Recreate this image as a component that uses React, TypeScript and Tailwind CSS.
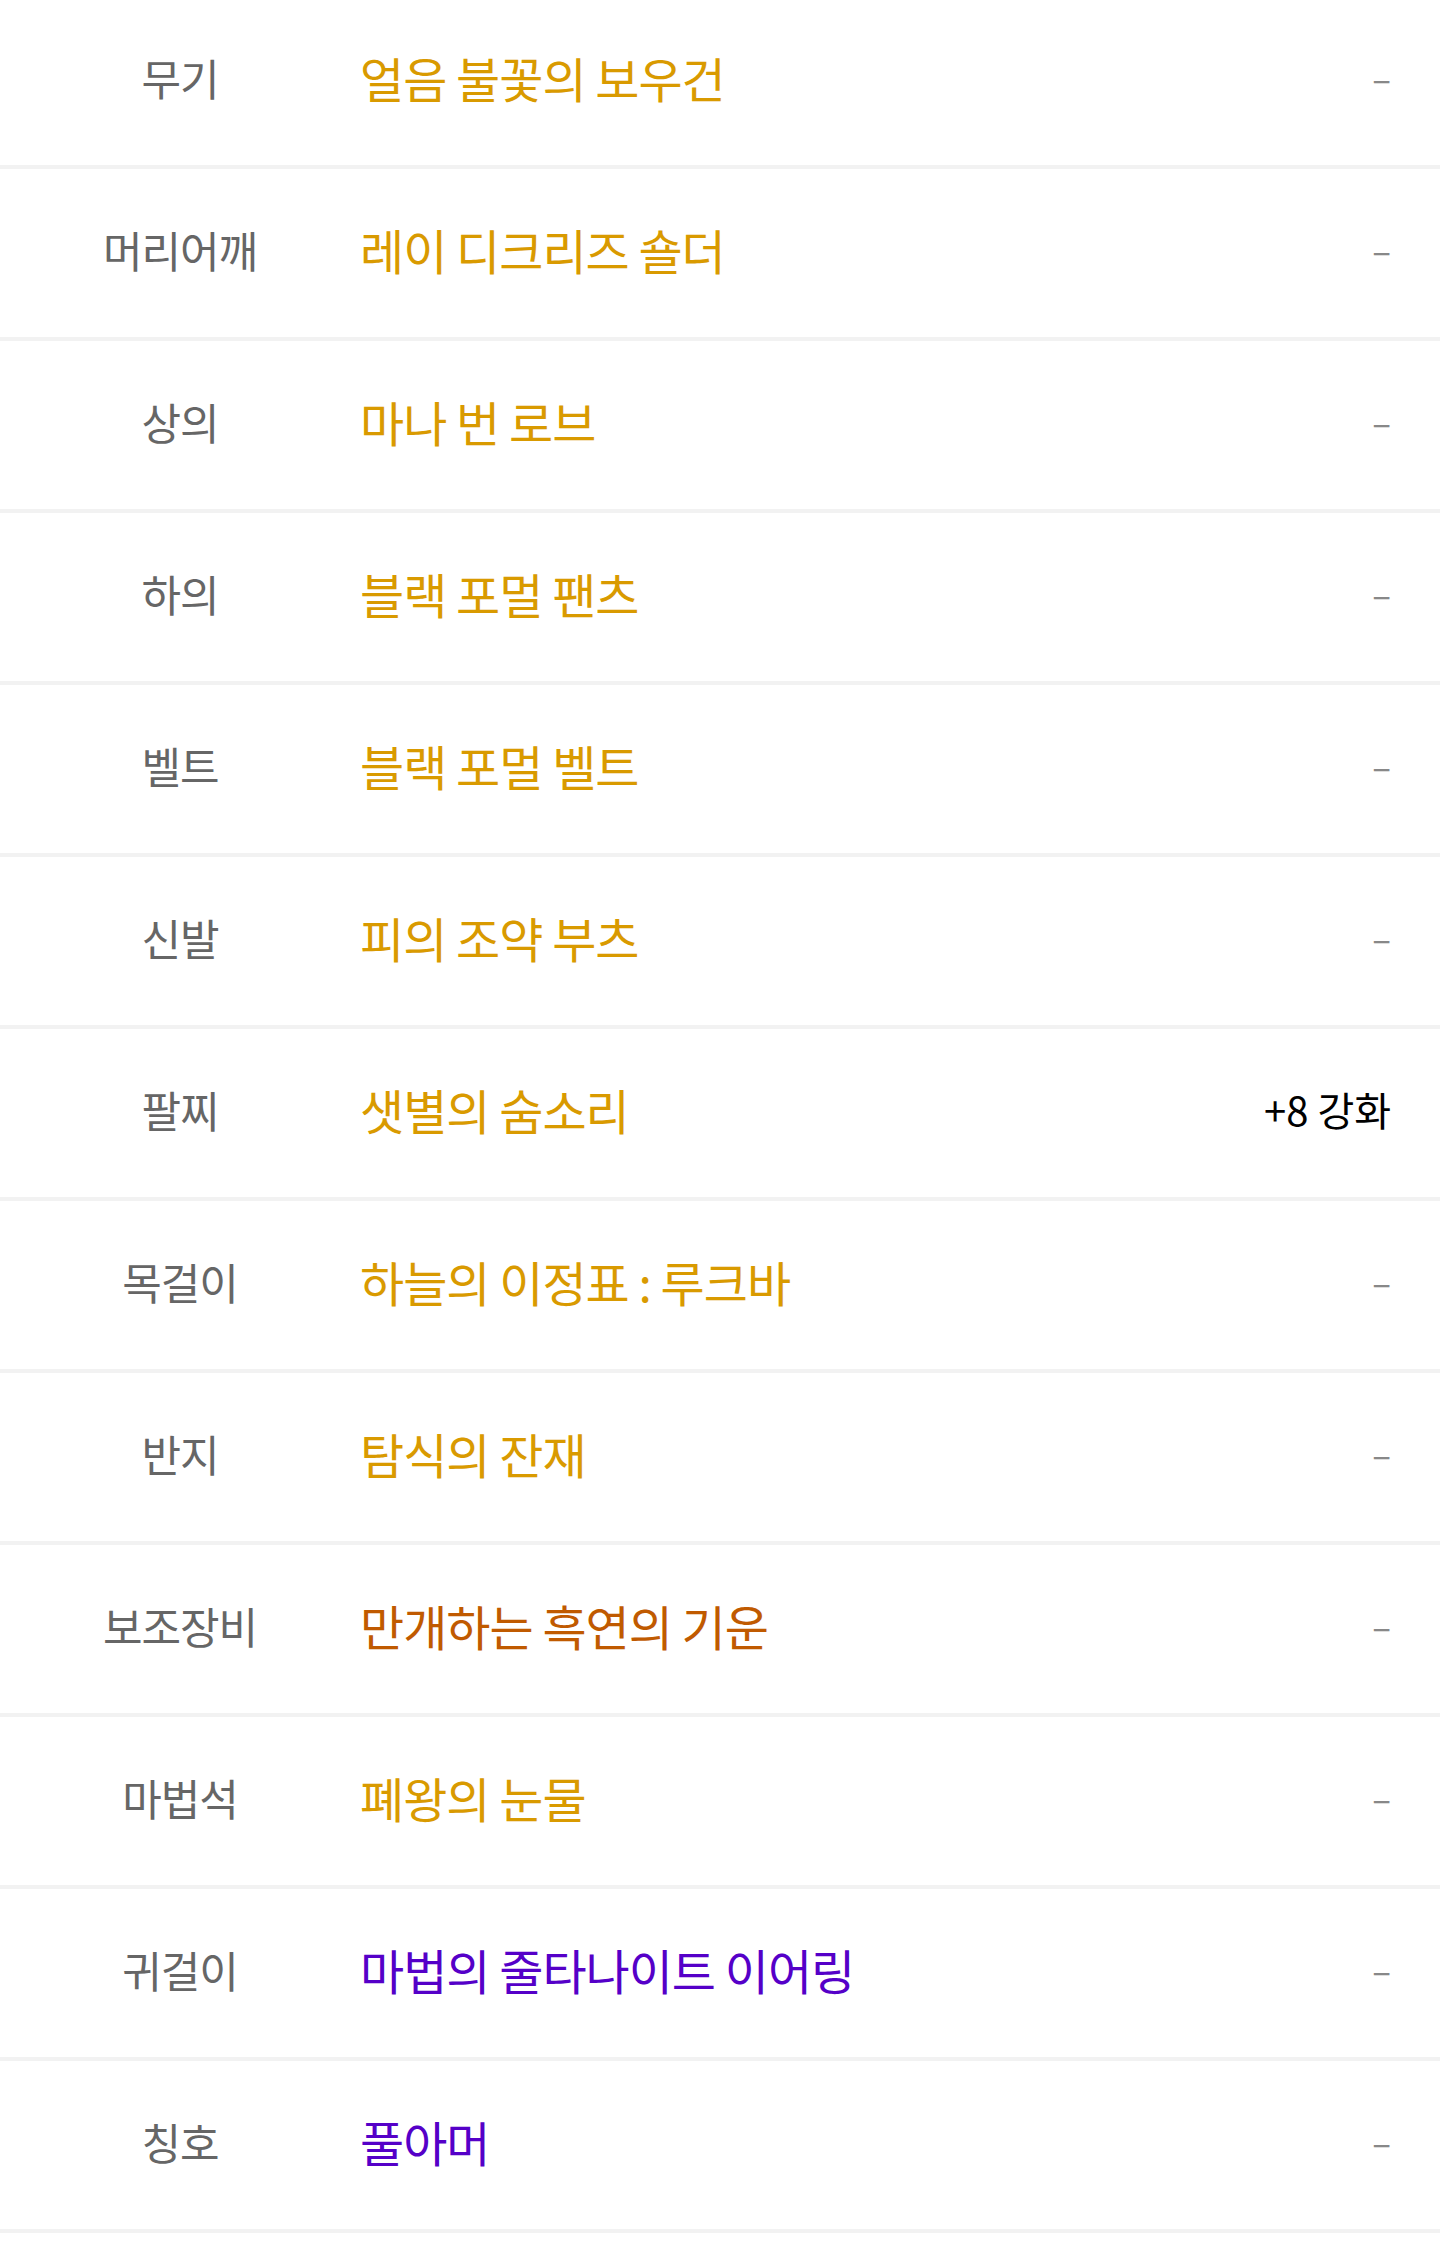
const FONT = '"Noto Sans CJK KR", "Noto Sans", sans-serif';

type Slot = {
  label: string;
  item: string;
  color: string;
  extra?: string;
};

const slots: Slot[] = [
  { label: '무기', item: '얼음 불꽃의 보우건', color: 'text-[#d99a00]' },
  { label: '머리어깨', item: '레이 디크리즈 숄더', color: 'text-[#d99a00]' },
  { label: '상의', item: '마나 번 로브', color: 'text-[#d99a00]' },
  { label: '하의', item: '블랙 포멀 팬츠', color: 'text-[#d99a00]' },
  { label: '벨트', item: '블랙 포멀 벨트', color: 'text-[#d99a00]' },
  { label: '신발', item: '피의 조약 부츠', color: 'text-[#d99a00]' },
  { label: '팔찌', item: '샛별의 숨소리', color: 'text-[#d99a00]', extra: '+8 강화' },
  { label: '목걸이', item: '하늘의 이정표 : 루크바', color: 'text-[#d99a00]' },
  { label: '반지', item: '탐식의 잔재', color: 'text-[#d99a00]' },
  { label: '보조장비', item: '만개하는 흑연의 기운', color: 'text-[#c05a00]' },
  { label: '마법석', item: '폐왕의 눈물', color: 'text-[#d99a00]' },
  { label: '귀걸이', item: '마법의 줄타나이트 이어링', color: 'text-[#5500c8]' },
  { label: '칭호', item: '풀아머', color: 'text-[#5500c8]' },
];

function SlotRow({ slot }: { slot: Slot }) {
  return (
    <div className="flex h-[172px] items-center border-b-4 border-[#f2f2f2] pb-[8px]">
      {/* Slot name */}
      <div className="w-[360px] shrink-0 text-center text-[43px] tracking-[-1px] text-[#666666]">
        {slot.label}
      </div>

      {/* Item name */}
      <div className={`flex-1 text-[48px] tracking-[-1px] ${slot.color}`}>{slot.item}</div>

      {/* Upgrade / empty */}
      <div className="pr-[49px] text-right">
        {slot.extra ? (
          <span className="text-[40px] text-black">{slot.extra}</span>
        ) : (
          <span className="text-[35px] text-[#888888]">–</span>
        )}
      </div>
    </div>
  );
}

export default function App() {
  return (
    <div className="min-h-[2246px] bg-white" style={{ fontFamily: FONT }}>
      <div className="-mt-[3px]">
        {slots.map((slot) => (
          <SlotRow key={slot.label} slot={slot} />
        ))}
      </div>
    </div>
  );
}
